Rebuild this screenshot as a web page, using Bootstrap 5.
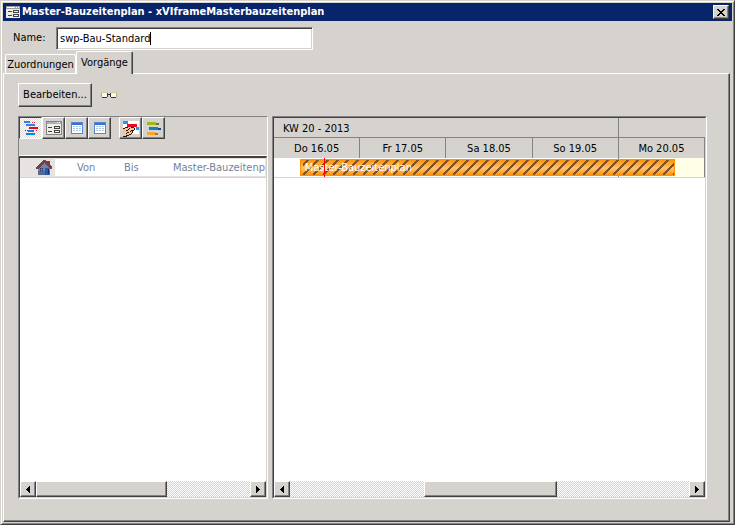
<!DOCTYPE html>
<html lang="de">
<head>
<meta charset="utf-8">
<meta name="viewport" content="width=device-width, initial-scale=1">
<title>Master-Bauzeitenplan</title>
<link rel="stylesheet" href="https://cdn.jsdelivr.net/npm/bootstrap@5.3.0/dist/css/bootstrap.min.css">
<style>
:root{--face:#d6d3ce;--shade:#848284;--dark:#424142}
body{font:11px/14px "DejaVu Sans Condensed","DejaVu Sans",sans-serif;color:#000;background:var(--face)}
svg{display:block;shape-rendering:crispEdges;flex-shrink:0}
.window{border:1px solid;border-color:var(--face) var(--dark) var(--dark) var(--face);box-shadow:inset 1px 1px #fff,inset -1px -1px var(--shade);padding:2px}
.titlebar{background:#08246b;color:#fff;height:18px;padding:0 3px;gap:2px}
.titlebar h1{font-size:11px;line-height:18px}
.raised{background:var(--face);color:#000;padding:0;border:1px solid;border-color:#fff var(--dark) var(--dark) #fff;box-shadow:inset -1px -1px var(--shade);border-radius:0}
.close-btn{width:16px;height:14px}
.name-row{padding:6px 0 0 10px}
.name-row label{width:43px}
.name-row input{width:257px;height:23px;padding:0 3px;border:1px solid;border-color:var(--shade) #fff #fff var(--shade);box-shadow:inset 1px 1px var(--dark),inset -1px -1px var(--face);font:inherit;outline:0;background:linear-gradient(#000,#000) 93px 4px/1px 13px no-repeat #fff;caret-color:transparent}
.tabs{height:24px;padding:1px 0 0 2px;margin-bottom:-1px}
.tabs button{background:var(--face);border:1px solid #fff;border-bottom:0;border-radius:2px 2px 0 0;font:inherit;padding:0;color:#000}
.tab-off{width:71px;height:20px}
.tabs .tab-on{width:57px;height:23px;border-right:1px solid var(--dark);box-shadow:inset -1px 0 var(--shade);position:relative}
.pane{border:1px solid;border-color:#fff var(--dark) var(--dark) #fff;box-shadow:inset -1px -1px var(--shade);padding:9px 22px 22px 14px;margin-right:2px;min-height:0}
.edit-btn{width:74px;height:24px;font:inherit}
.panels{margin-top:9px}
.sunken{border:1px solid;border-color:var(--shade) #fff #fff var(--shade);min-width:0}
.sunken-in{border:1px solid;border-color:var(--dark) var(--face) var(--face) var(--dark);min-height:0}
.left-panel{flex:248 1 0}
.left-panel .sunken-in{border-top-width:2px}
.right-panel{flex:433 1 0}
.toolbar{height:39px;border-bottom:1px solid #fff}
.tool{width:23px;height:22px;display:flex;align-items:center;justify-content:center}
.tool.pressed{border-color:var(--dark) #fff #fff var(--dark);box-shadow:none;background:repeating-conic-gradient(#fff 0 25%,#dedbd6 0 50%) 0 0/2px 2px}
.plan-row{height:20px;color:#73829a;background:#e7e3e0;border-bottom:1px solid var(--face)}
.plan-icon{width:34px;padding:1px 0 0 16px}
.plan-cells{background:#fff;border:1px solid #e7dfdd;line-height:18px;padding-left:22px}
.cell-von{width:47px}
.cell-bis{width:49px}
.week-row{height:20px;border-bottom:1px solid var(--shade);background:var(--face);line-height:21px}
.week-title{width:80%;padding-left:9px;border-right:1px solid var(--shade)}
.day{flex:1 1 0;border-right:1px solid var(--shade)}
.day-row{height:20px;background:var(--face);line-height:21px}
.bar-row{height:20px;border-bottom:1px solid var(--face);background:#fff}
.bar-row .day{border-color:#fff}
.bar-row .day:nth-child(4),.bar-row .day:nth-child(5){border-color:var(--shade)}
.bar-row .day:nth-child(5){background:#ffffe7}
.task{top:1px;height:17px;border:1px solid #ff9200;color:#fff;line-height:16px;padding-left:4px;background:linear-gradient(#ff9200,#ffc373 55%,#ff9200)}
.task svg{position:absolute;inset:0 0 auto auto;width:calc(100% - 2px);height:15px}
.task span{position:relative}
.today{top:0;bottom:0;width:1px;background:#f00}
.scroll{height:16px}
.scroll button{width:16px;height:16px;display:flex;align-items:center;justify-content:center}
.track{background:repeating-conic-gradient(#fff 0 25%,var(--face) 0 50%) 0 0/2px 2px}
</style>
<script src="https://cdn.jsdelivr.net/npm/bootstrap@5.3.0/dist/js/bootstrap.bundle.min.js"></script>
</head>
<body>
<main class="window d-flex flex-column vh-100">
  <header class="titlebar d-flex align-items-center">
    <svg width="14" height="12" aria-hidden="true"><path d="M0 0h14v12H0z" fill="#efebe7"/><path d="M0 0h14v3H0z" fill="#9c9a9c"/><path d="M1 1h8v1H1zM10 1h1v1h-1zM12 1h1v1h-1z" fill="#fff"/><path d="M2 5h4v1H2zM2 9h4v1H2zM7 4h6v3H7zM7 8h6v3H7z" fill="#424142"/><path d="M8 5h4v1H8zM8 9h4v1H8z" fill="#ffff9c"/></svg>
    <h1 class="fw-bold mb-0 flex-grow-1">Master-Bauzeitenplan - xVIframeMasterbauzeitenplan</h1>
    <button class="raised close-btn d-flex align-items-center justify-content-center" type="button" aria-label="Schließen"><svg width="8" height="7"><path d="M0 0h2v1h1v1h2V1h1V0h2v1H7v1H6v1H5v1h1v1h1v1h1v1H6V6H5V5H3v1H2v1H0V6h1V5h1V4h1V3H2V2H1V1H0z"/></svg></button>
  </header>
  <div class="name-row d-flex">
    <label for="name" class="pt-1">Name:</label>
    <input id="name" type="text" value="swp-Bau-Standard">
  </div>
  <div class="tabs d-flex align-items-end flex-shrink-0" role="tablist">
    <button class="tab-off" type="button" role="tab" aria-selected="false">Zuordnungen</button>
    <button class="tab-on" type="button" role="tab" aria-selected="true">Vorgänge</button>
  </div>
  <section class="pane d-flex flex-column flex-grow-1" role="tabpanel">
    <div class="d-flex align-items-center flex-shrink-0">
      <button class="raised edit-btn" type="button">Bearbeiten...</button>
      <svg class="ms-2" width="18" height="9" aria-hidden="true"><path d="M1 2h6v5H2V6H1zM11 2h6v4h-1v1h-5z" fill="#f7f7f7"/><path d="M1 1h6v1H1zM11 1h6v1h-6z" fill="#cecb84"/><path d="M1 2h1v4H1zM16 2h1v4h-1z" fill="#adaa84"/><path d="M7 2h1v1h2V2h1v4h-1V4H8v2H7zM2 6h5v1H2zM11 6h5v1h-5z" fill="#393831"/></svg>
    </div>
    <div class="panels d-flex gap-1 flex-grow-1">
      <div class="sunken left-panel d-flex flex-column">
        <div class="toolbar d-flex align-items-start flex-shrink-0">
          <button class="raised tool pressed" type="button" aria-label="Gantt"><svg width="16" height="16"><path d="M1 1h6v2H1zM3 4h9v2H3z" fill="#3979ef"/><path d="M9 2h1v1H9zM11 2h1v1h-1zM6 7h9v2H6zM2 10h1v1H2zM4 10h1v1H4zM13 10h1v1h-1zM3 13h1v1H3z" fill="#e70821"/><path d="M5 10h6v2H5zM3 13h9v2H3z" fill="#0882e7"/></svg></button>
          <button class="raised tool" type="button" aria-label="Formular"><svg width="16" height="14"><path d="M0 0h16v14H0z" fill="#848284"/><path d="M1 3h14v10H1z" fill="#efefe7"/><path d="M1 1h14v2H1z" fill="#a5b2bd"/><path d="M11 1h1v1h-1zM13 1h1v1h-1z" fill="#fff"/><path d="M2 6h4v1H2zM2 10h4v1H2zM8 5h6v3H8zM8 9h6v3H8z" fill="#424142"/><path d="M9 6h4v1H9z" fill="#ffff31"/><path d="M9 10h4v1H9z" fill="#fff"/></svg></button>
          <button class="raised tool" type="button" aria-label="Tabelle"><svg width="12" height="12"><path d="M0 0h12v12H0z" fill="#5a86ce"/><path d="M1 3h10v8H1z" fill="#fff"/><path d="M1 1h10v2H1z" fill="#3971d6"/><path d="M2 4h2v1H2zM5 4h2v1H5zM8 4h2v1H8zM2 6h2v1H2zM5 6h2v1H5zM8 6h2v1H8zM2 8h2v1H2zM5 8h2v1H5zM8 8h2v1H8z" fill="#a5c3e7"/></svg></button>
          <button class="raised tool" type="button" aria-label="Tabelle 2"><svg width="12" height="12"><path d="M0 0h12v12H0z" fill="#5a86ce"/><path d="M1 3h10v8H1z" fill="#fff"/><path d="M1 1h10v2H1z" fill="#3971d6"/><path d="M2 4h2v1H2zM5 4h2v1H5zM8 4h2v1H8zM2 6h2v1H2zM5 6h2v1H5zM8 6h2v1H8zM2 8h2v1H2zM5 8h2v1H5zM8 8h2v1H8z" fill="#a5c3e7"/></svg></button>
          <button class="raised tool ms-2" type="button" aria-label="Verschieben"><svg width="18" height="17"><path d="M1 1h16v13H1z" fill="#fff"/><path d="M1 1h5v3H1zM14 7h3v3h-3z" fill="#189aff"/><path d="M5 4h10v3H5z" fill="#e70821"/><path d="M1 9h2V8h3V7h3v1h4v2h-2v1h-1v2H9v1H8v1H5v1H1z" fill="#f7c39c"/><path d="M1 8h2v1H1zM3 7h3v1H3zM6 9h1v1H6zM4 10h2v1H4zM7 8h1v1H7zM9 7h3v1H9zM12 8h1v2h-1zM9 10h3v1H9zM8 11h1v1H8zM10 11h1v2h-1zM9 13h1v1H9zM7 14h2v1H7zM4 15h3v1H4zM1 16h4v1H1zM5 12h2v1H5zM4 13h1v1H4z" fill="#211810"/></svg></button>
          <button class="raised tool" type="button" aria-label="Balken"><svg width="16" height="15"><path d="M1 1h9v3H1z" fill="#9cba10"/><path d="M10 2h3v2h-3z" fill="#638210"/><path d="M3 6h9v3H3z" fill="#1879ce"/><path d="M12 7h3v2h-3z" fill="#104a84"/><path d="M1 11h8v3H1z" fill="#f7a629"/><path d="M9 12h3v2H9z" fill="#b57521"/></svg></button>
        </div>
        <div class="sunken-in flex-grow-1 d-flex flex-column">
          <div class="plan-row d-flex">
            <div class="plan-icon flex-shrink-0"><svg width="16" height="17" aria-hidden="true"><path d="M11 2h3v5h-3z" fill="#8c3929"/><path d="M2 8L8 2l6 6v8H2z" fill="#7382a5"/><path d="M2 12h12v4H2z" fill="#5a6984"/><path d="M0 8L7 1h2l7 7v2h-2L8 4 2 10H0z" fill="#73414a"/><path d="M4 9h3v3H4z" fill="#294984"/><path d="M5 10h1v1H5z" fill="#adc7ef"/><path d="M9 9h4v7H9z" fill="#2159b5"/><path d="M12 10h1v5h-1z" fill="#08306b"/></svg></div>
            <div class="plan-cells flex-grow-1 d-flex overflow-hidden text-nowrap">
              <div class="cell-von flex-shrink-0">Von</div><div class="cell-bis flex-shrink-0">Bis</div><div>Master-Bauzeitenplan</div>
            </div>
          </div>
          <div class="bg-white flex-grow-1"></div>
          <div class="scroll d-flex">
            <button class="raised" type="button" aria-label="Nach links"><svg width="4" height="7"><path d="M3 0h1v7H3V6H2V5H1V4H0V3h1V2h1V1h1z"/></svg></button>
            <div class="track flex-grow-1 d-flex"><div class="raised" style="width:61%"></div></div>
            <button class="raised" type="button" aria-label="Nach rechts"><svg width="4" height="7"><path d="M0 0h1v1h1v1h1v1h1v1H3v1H2v1H1v1H0z"/></svg></button>
          </div>
        </div>
      </div>
      <div class="sunken right-panel d-flex flex-column">
        <div class="sunken-in flex-grow-1 d-flex flex-column">
          <div class="week-row d-flex"><div class="week-title">KW 20 - 2013</div></div>
          <div class="day-row d-flex text-center"><div class="day">Do 16.05</div><div class="day">Fr 17.05</div><div class="day">Sa 18.05</div><div class="day">So 19.05</div><div class="day">Mo 20.05</div></div>
          <div class="bar-row d-flex position-relative">
            <div class="day"></div><div class="day"></div><div class="day"></div><div class="day"></div><div class="day"></div>
            <div class="task position-absolute text-nowrap overflow-hidden" style="left:6%;width:87%"><svg aria-hidden="true"><defs><pattern id="hatch" width="10" height="15" patternUnits="userSpaceOnUse"><path d="M-10 15L5 0M0 15L15 0M10 15L25 0M-20 15L-5 0" stroke="#845121" stroke-width="2"/></pattern></defs><rect width="100%" height="15" fill="url(#hatch)"/></svg><span>Master-Bauzeitenplan</span></div>
            <div class="today position-absolute" style="left:11.6%"></div>
          </div>
          <div class="bg-white flex-grow-1"></div>
          <div class="scroll d-flex">
            <button class="raised" type="button" aria-label="Nach links"><svg width="4" height="7"><path d="M3 0h1v7H3V6H2V5H1V4H0V3h1V2h1V1h1z"/></svg></button>
            <div class="track flex-grow-1 d-flex"><div class="raised" style="margin-left:33.5%;width:33.3%"></div></div>
            <button class="raised" type="button" aria-label="Nach rechts"><svg width="4" height="7"><path d="M0 0h1v1h1v1h1v1h1v1H3v1H2v1H1v1H0z"/></svg></button>
          </div>
        </div>
      </div>
    </div>
  </section>
</main>
</body>
</html>
